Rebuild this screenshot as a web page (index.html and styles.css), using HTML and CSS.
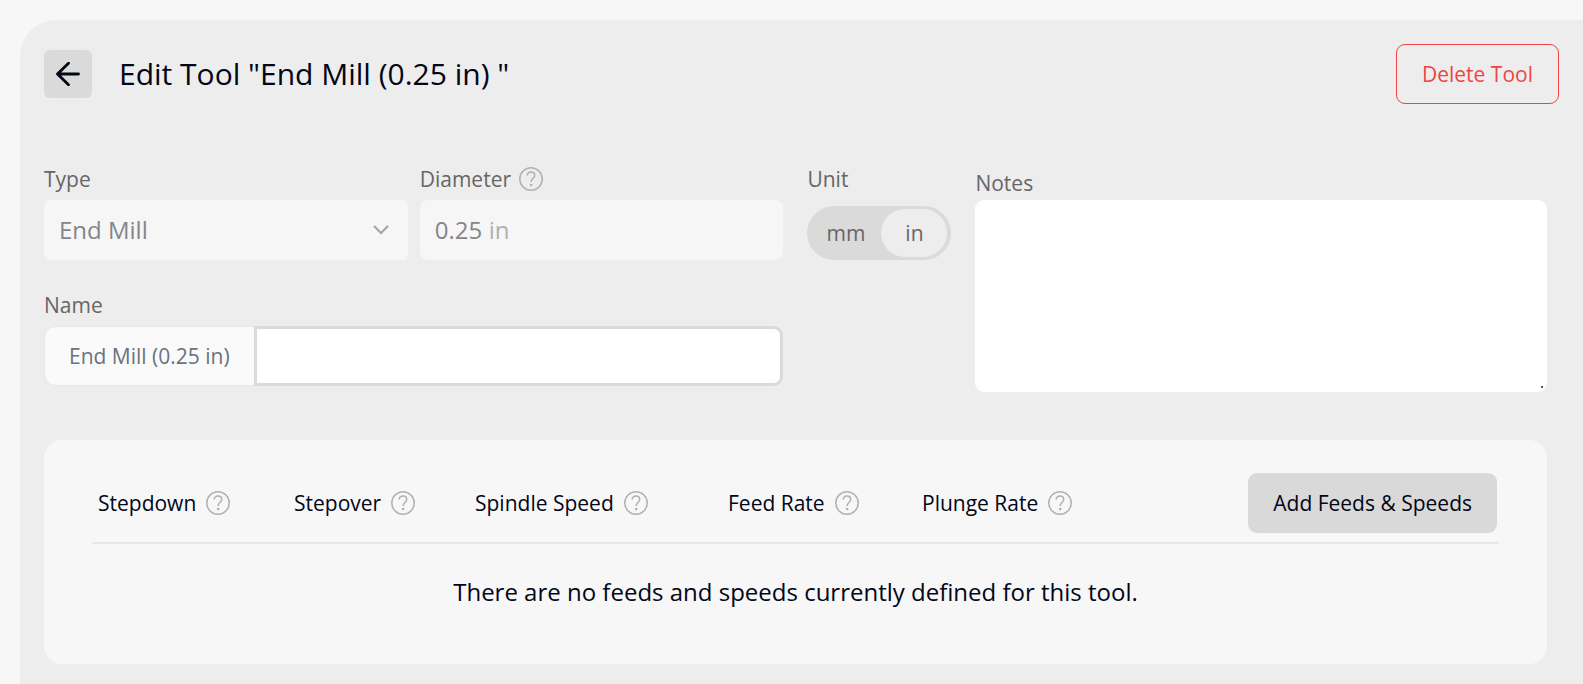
FILE: index.html
```html
<!DOCTYPE html>
<html lang="en">
<head>
<meta charset="utf-8">
<title>Edit Tool</title>
<link rel="stylesheet" href="styles.css">
</head>
<body>
<svg class="sprite" aria-hidden="true">
  <symbol id="help" viewBox="0 0 24 24">
    <circle cx="12" cy="12" r="11.2" fill="none" stroke="currentColor" stroke-width="1.5"/>
    <path d="M8.200 8.400C8.200 6.400 9.800 5 12 5s3.700 1.400 3.700 3.400c0 2.800-3.500 3-3.500 6.600" fill="none" stroke="currentColor" stroke-width="1.5"/>
    <circle cx="12.200" cy="18" r="1.300" fill="currentColor"/>
  </symbol>
</svg>
<main class="panel">
  <header class="header">
    <button class="back" type="button" aria-label="Back">
      <svg class="back-icon" viewBox="0 0 24 24"><path d="M22.500 12H1.500M12.500 1.200 1.500 12l11 10.800"/></svg>
    </button>
    <h1 class="title">Edit Tool "End Mill (0.25 in) "</h1>
    <button class="delete" type="button">Delete Tool</button>
  </header>

  <div class="content">
    <form class="form">
      <div class="main-fields">
        <div class="pair">
          <div class="field">
            <label class="label" for="type">Type</label>
            <div class="select-wrap">
              <select class="box select" id="type" disabled><option>End Mill</option></select>
              <svg class="chevron" viewBox="0 0 16 10"><path d="m1 1 7 7 7-7"/></svg>
            </div>
          </div>
          <div class="field">
            <label class="label" for="diameter">Diameter <svg class="help"><use href="#help"/></svg></label>
            <div class="box measure">
              <input class="measure-input" id="diameter" value="0.25" disabled>
              <span class="suffix">in</span>
            </div>
          </div>
        </div>
        <div class="field">
          <label class="label" for="name">Name</label>
          <div class="name-group">
            <span class="prefix">End Mill (0.25 in)</span>
            <input class="name-input" id="name" type="text">
          </div>
        </div>
      </div>

      <div class="field">
        <span class="label" id="unit-label">Unit</span>
        <div class="toggle" role="group" aria-labelledby="unit-label">
          <button class="unit" type="button" aria-pressed="false">mm</button>
          <button class="unit unit-on" type="button" aria-pressed="true">in</button>
        </div>
      </div>

      <div class="field">
        <label class="label label-low" for="notes">Notes</label>
        <textarea class="notes" id="notes"></textarea>
      </div>
    </form>

    <section class="card">
      <table class="feeds">
        <colgroup><col class="c-down"><col class="c-over"><col class="c-spindle"><col class="c-feed"><col></colgroup>
        <thead>
          <tr>
            <th><span class="head">Stepdown <svg class="help"><use href="#help"/></svg></span></th>
            <th><span class="head">Stepover <svg class="help"><use href="#help"/></svg></span></th>
            <th><span class="head">Spindle Speed <svg class="help"><use href="#help"/></svg></span></th>
            <th><span class="head">Feed Rate <svg class="help"><use href="#help"/></svg></span></th>
            <th><span class="head">Plunge Rate <svg class="help"><use href="#help"/></svg></span></th>
            <th class="action"><button class="add" type="button">Add Feeds &amp; Speeds</button></th>
          </tr>
        </thead>
        <tbody>
          <tr><td class="empty" colspan="6">There are no feeds and speeds currently defined for this tool.</td></tr>
        </tbody>
      </table>
    </section>
  </div>
</main>
</body>
</html>
```
FILE: styles.css
```css
* { box-sizing: border-box; }

body {
  margin: 0;
  padding: 20px 0 0 20px;
  background: #f7f7f7;
  color: #020617;
  font-family: "Open Sans", "Noto Sans", sans-serif;
  font-size: 21px;
  line-height: 30px;
}

button, input, select, textarea { font: inherit; color: inherit; margin: 0; }
button { cursor: pointer; }
.sprite { display: none; }

.panel {
  min-height: calc(100vh - 20px);
  padding: 24px 24px 20px;
  border-radius: 36px 0 0 0;
  background: #ededed;
}

.header { display: flex; align-items: center; height: 60px; }

.back {
  display: grid;
  place-items: center;
  width: 48px;
  height: 48px;
  padding: 0;
  border: 0;
  border-radius: 6px;
  background: #dadada;
}
.back-icon {
  width: 24px;
  height: 24px;
  fill: none;
  stroke: #020617;
  stroke-width: 2.8;
  stroke-linecap: round;
  stroke-linejoin: round;
}

.title { flex: 1; margin: 0 0 0 27px; font-size: 30px; font-weight: 400; line-height: 42px; }

.delete {
  height: 60px;
  padding: 0 25px;
  border: 1px solid #ef4444;
  border-radius: 9px;
  background: transparent;
  color: #ef4444;
}

.content { padding-right: 12px; }

.form {
  display: grid;
  grid-template-columns: 740fr 144px 572fr;
  gap: 24px;
  margin-top: 60px;
}
.main-fields { display: grid; gap: 30px; align-content: start; }
.pair { display: grid; grid-template-columns: 1fr 1fr; gap: 12px; }
.field { display: flex; flex-direction: column; }

.label {
  display: flex;
  align-items: center;
  gap: 8px;
  height: 36px;
  padding-bottom: 6px;
  color: #666;
}
.label-low { padding: 2px 0 0; }
.help { flex: none; width: 24px; height: 24px; color: #b0b0b0; }

.box {
  width: 100%;
  height: 60px;
  padding: 0 15px;
  border: 0;
  border-radius: 8px;
  background: #f6f6f6;
  color: #85858b;
  font-size: 24px;
}
.select-wrap { position: relative; }
.select { appearance: none; opacity: 1; border-radius: 6px; }
.chevron {
  position: absolute;
  top: 25px;
  right: 19px;
  width: 16px;
  height: 10px;
  fill: none;
  stroke: #a3a3a3;
  stroke-width: 2;
  pointer-events: none;
}
.measure { display: flex; align-items: center; gap: 5px; }
.measure-input { width: 49px; padding: 0; border: 0; background: transparent; }
.suffix { color: #b0b0b0; }

.name-group { display: flex; height: 60px; }
.prefix {
  display: flex;
  align-items: center;
  padding: 0 24px;
  border: 1px solid #e5e7eb;
  border-right: 0;
  border-radius: 12px 0 0 12px;
  background: #fafafa;
  color: #6b7280;
}
.name-input {
  flex: 1;
  min-width: 0;
  padding: 0 15px;
  border: 3px solid #dadada;
  border-radius: 0 9px 9px 0;
  background: #fff;
}

.toggle {
  display: flex;
  height: 54px;
  margin-top: 6px;
  padding: 3px 4px 3px 3px;
  border-radius: 27px;
  background: #dadada;
}
.unit {
  width: 71px;
  padding: 0;
  border: 0;
  border-radius: 24px;
  background: transparent;
  color: #666;
}
.unit-on { flex: 1; background: #ededed; }

.notes {
  height: 192px;
  padding: 12px 15px;
  border: 0;
  border-radius: 9px;
  background: #fff;
  resize: vertical;
}
.notes::-webkit-resizer {
  background: linear-gradient(#555, #555) 9px 9px / 2px 2px no-repeat;
}

.card { margin-top: 48px; padding: 33px 48px; border-radius: 18px; background: #f7f7f7; }
.feeds { width: 100%; border-collapse: collapse; }
.feeds th { padding: 0 0 9px 6px; border-bottom: 2px solid #e3e8ef; font-weight: 400; text-align: left; }
.head { display: flex; align-items: center; gap: 10px; white-space: nowrap; }
.c-down { width: 196px; }
.c-over { width: 181px; }
.c-spindle { width: 253px; }
.c-feed { width: 194px; }
.feeds .action { padding-right: 2px; text-align: right; }
.add {
  height: 60px;
  padding: 0 25px;
  border: 0;
  border-radius: 9px;
  background: #d9d9d9;
  white-space: nowrap;
}
.empty { padding: 33px 0 24px; font-size: 24px; text-align: center; }
```
